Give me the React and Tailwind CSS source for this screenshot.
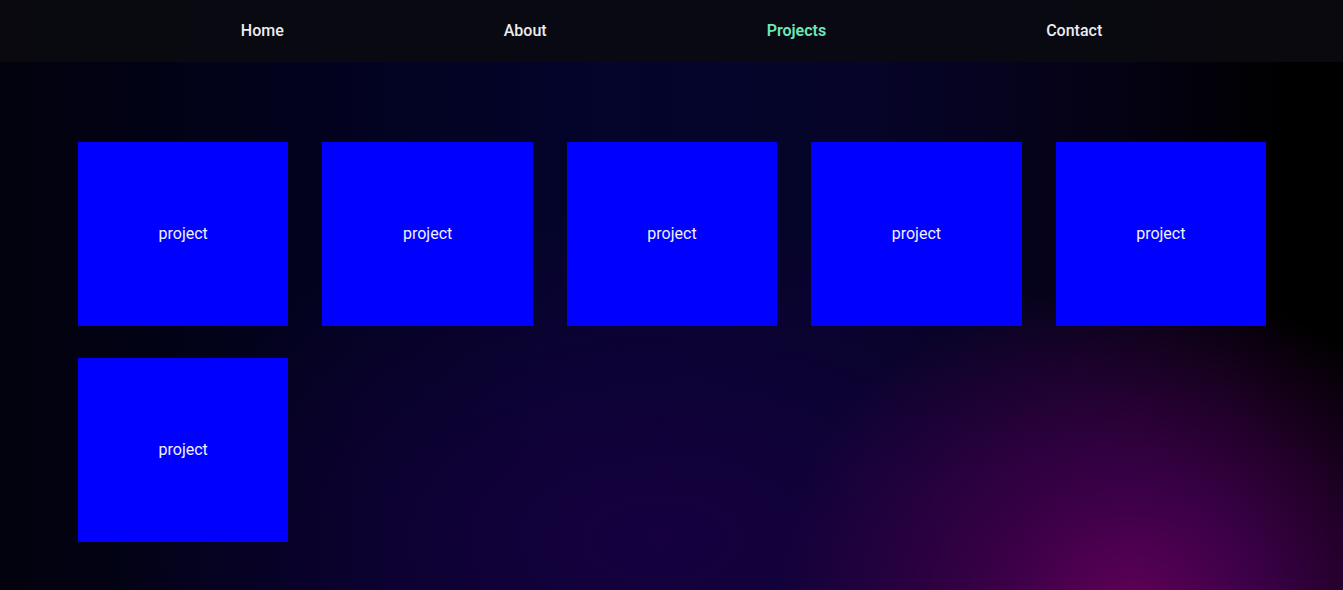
import React from "react";

const links = ["Home", "About", "Projects", "Contact"];

export default function App() {
  const projects = [1, 2, 3, 4, 5, 6];

  return (
    <div className="min-h-screen w-full font-['Roboto',_'Liberation_Sans',_sans-serif] bg-[radial-gradient(360px_330px_at_1130px_610px,#600058_0%,#3c0048_35%,rgba(30,0,50,0)_100%),radial-gradient(560px_330px_at_660px_540px,#160040_0%,rgba(12,0,40,0)_100%),linear-gradient(to_right,#02020e_0%,#02021c_20%,#04042c_45%,#060428_65%,#050216_82%,#000000_96%)]">
      <nav className="h-[62px] bg-[rgba(10,10,16,0.88)] flex items-center justify-center gap-[220px] text-[16px]">
        {links.map((link) => (
          <a
            key={link}
            href="#"
            className={
              link === "Projects"
                ? "font-semibold text-[#6ee7b7]"
                : "font-medium text-[#ececf0]"
            }
          >
            {link}
          </a>
        ))}
      </nav>

      <main className="pt-[80px] pb-[48px] pl-[78px] pr-[77px]">
        <div className="grid grid-cols-5 gap-x-[34px] gap-y-8">
          {projects.map((p) => (
            <div
              key={p}
              className="h-[184px] bg-[#0000ff] flex items-center justify-center text-[16px] text-[#f0f0ff]"
            >
              project
            </div>
          ))}
        </div>
      </main>
    </div>
  );
}
